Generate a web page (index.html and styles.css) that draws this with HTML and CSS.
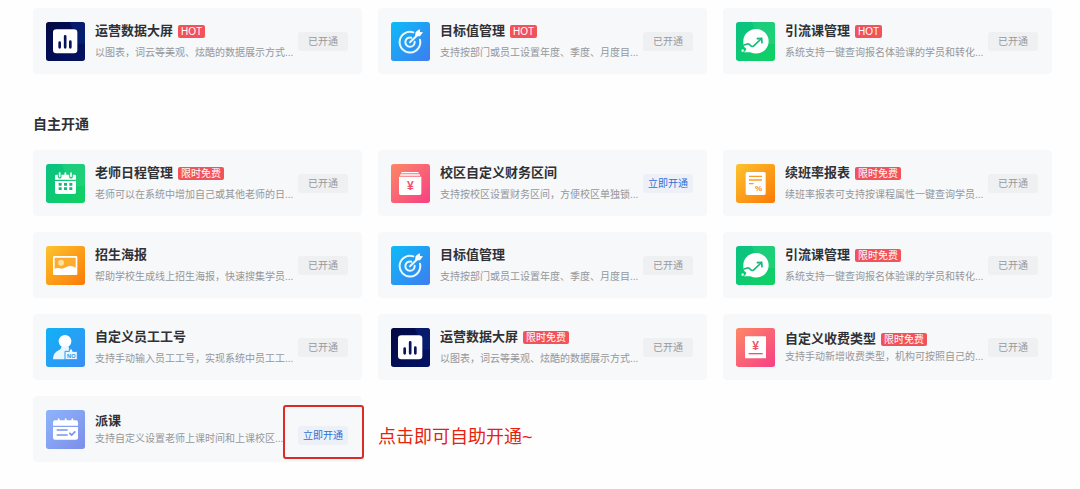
FILE: index.html
```html
<!DOCTYPE html>
<html lang="zh-CN">
<head>
<meta charset="utf-8">
<meta name="viewport" content="width=device-width, initial-scale=1">
<title>自主开通</title>
<link rel="stylesheet" href="styles.css">
</head>
<body>
<svg class="sprite" aria-hidden="true">
  <defs>
    <linearGradient id="g-navy" x1="0" y1="0" x2="1" y2="1"><stop offset="0" stop-color="#020944"/><stop offset="1" stop-color="#041264"/></linearGradient>
    <linearGradient id="g-blue" x1="0" y1="0" x2="1" y2="1"><stop offset="0" stop-color="#0cbcf8"/><stop offset="1" stop-color="#3f7cf0"/></linearGradient>
    <linearGradient id="g-green" x1="0" y1="0" x2="1" y2="1"><stop offset="0" stop-color="#09c183"/><stop offset="1" stop-color="#12d163"/></linearGradient>
    <linearGradient id="g-orange" x1="0" y1="0" x2="1" y2="1"><stop offset="0" stop-color="#fdc32d"/><stop offset="1" stop-color="#fb7a08"/></linearGradient>
    <linearGradient id="g-pink" x1="0" y1="0" x2="1" y2="1"><stop offset="0" stop-color="#fd8865"/><stop offset="1" stop-color="#f73f85"/></linearGradient>
    <linearGradient id="g-sky" x1="0" y1="0" x2="1" y2="1"><stop offset="0" stop-color="#10b2f6"/><stop offset="1" stop-color="#3a8ef3"/></linearGradient>
    <linearGradient id="g-lilac" x1="0" y1="0" x2="1" y2="1"><stop offset="0" stop-color="#8db4fb"/><stop offset="1" stop-color="#7d8eea"/></linearGradient>
  </defs>
  <symbol id="i-bars" viewBox="0 0 117 117">
    <rect width="117" height="117" rx="8" fill="url(#g-navy)"/>
    <path d="M72 0h37q8 0 8 8v57H94z" fill="#0a2a86" opacity=".5"/>
    <rect x="21" y="22" width="73" height="72" rx="10" fill="#fff"/>
    <path d="M41 62v14M57.500 43v33M73 59v17" stroke="#07145c" stroke-width="8" stroke-linecap="round"/>
  </symbol>
  <symbol id="i-target" viewBox="0 0 117 117">
    <rect width="117" height="117" rx="8" fill="url(#g-blue)"/>
    <g fill="none" stroke="#e9f8ff" stroke-width="6" stroke-linecap="round">
      <path d="M67 31A31 31 0 1 0 87 53"/>
      <path d="M61 47A14 14 0 1 0 71 59"/>
      <path d="M57 61L82 37"/>
    </g>
    <path d="M72 43l2-13 12-9 1 9 9 1-9 12z" fill="#fff"/>
  </symbol>
  <symbol id="i-growth" viewBox="0 0 117 117">
    <rect width="117" height="117" rx="8" fill="url(#g-green)"/>
    <path d="M48 0h61q8 0 8 8v58L70 66z" fill="#35d884" opacity=".4"/>
    <path d="M22 61A38 37 0 1 1 43 91L23 91q7-4 8-11-7-4-9-12z" fill="#fff"/>
    <path d="M22 70l12-4q5-1 9 4 6 7 12 0l20-19" fill="none" stroke="#17b87b" stroke-width="5"/>
    <path d="M62 50l15-1 1 15" fill="none" stroke="#17b87b" stroke-width="5"/>
    <circle cx="20" cy="86" r="4" fill="#c7f5dd"/>
  </symbol>
  <symbol id="i-calendar" viewBox="0 0 117 117">
    <rect width="117" height="117" rx="8" fill="url(#g-green)"/>
    <path d="M48 0h61q8 0 8 8v58L70 66z" fill="#35d884" opacity=".4"/>
    <path d="M27 47V36q0-4 4-4h55q4 0 4 4v11zM27 51h63v34q0 5-5 5H32q-5 0-5-5z" fill="#fff"/>
    <path d="M41 27v11M75 27v11" stroke="#1bc97e" stroke-width="11" stroke-linecap="round"/>
    <path d="M41 27v10M58 27v6M75 27v10" stroke="#fff" stroke-width="5" stroke-linecap="round"/>
    <path d="M38 61h9M54 61h9M70 61h9M38 74h9M54 74h9M70 74h9" stroke="#12b878" stroke-width="8"/>
  </symbol>
  <symbol id="i-image" viewBox="0 0 117 117">
    <rect width="117" height="117" rx="8" fill="url(#g-orange)"/>
    <rect x="21" y="30" width="73" height="57" rx="4" fill="#fff"/>
    <path d="M26 35h63v30q-15-9-29-1-12 7-19 3-8-3-15 1z" fill="#fdac2d"/>
    <circle cx="45" cy="50" r="9" fill="#ffdf9c"/>
  </symbol>
  <symbol id="i-schedule" viewBox="0 0 117 117">
    <rect width="117" height="117" rx="8" fill="url(#g-lilac)"/>
    <path d="M21 47V37q0-6 6-6h63q6 0 6 6v10zM21 51h75v32q0 6-6 6H27q-6 0-6-6z" fill="#fff"/>
    <path d="M38 27v10M59 27v10M79 27v10" stroke="#fff" stroke-width="5" stroke-linecap="round"/>
    <path d="M32 60h33M32 75h33M70 69l7 6 11-11" fill="none" stroke="#7796ee" stroke-width="5"/>
  </symbol>
</svg>

<main class="page">
  <section class="grid" aria-label="热门应用">
    <article class="card">
      <svg class="icon" aria-hidden="true"><use href="#i-bars"/></svg>
      <div class="info"><h3 class="name">运营数据大屏<span class="badge">HOT</span></h3><p class="desc">以图表，词云等美观、炫酷的数据展示方式...</p></div>
      <button class="btn" type="button" disabled>已开通</button>
    </article>
    <article class="card">
      <svg class="icon" aria-hidden="true"><use href="#i-target"/></svg>
      <div class="info"><h3 class="name">目标值管理<span class="badge">HOT</span></h3><p class="desc">支持按部门或员工设置年度、季度、月度目...</p></div>
      <button class="btn" type="button" disabled>已开通</button>
    </article>
    <article class="card">
      <svg class="icon" aria-hidden="true"><use href="#i-growth"/></svg>
      <div class="info"><h3 class="name">引流课管理<span class="badge">HOT</span></h3><p class="desc">系统支持一键查询报名体验课的学员和转化...</p></div>
      <button class="btn" type="button" disabled>已开通</button>
    </article>
  </section>

  <h2 class="heading">自主开通</h2>

  <section class="grid" aria-label="自主开通">
    <article class="card">
      <svg class="icon" aria-hidden="true"><use href="#i-calendar"/></svg>
      <div class="info"><h3 class="name">老师日程管理<span class="badge">限时免费</span></h3><p class="desc">老师可以在系统中增加自己或其他老师的日...</p></div>
      <button class="btn" type="button" disabled>已开通</button>
    </article>
    <article class="card">
      <svg class="icon" viewBox="0 0 117 117" aria-hidden="true">
        <rect width="117" height="117" rx="8" fill="url(#g-pink)"/>
        <path d="M34 24h46q3 0 4 4H30q1-4 4-4zM28 31h59v4H27z" fill="#fff"/>
        <path d="M24 38h67v50q0 5-5 5H29q-5 0-5-5z" fill="#fff"/>
        <text x="58" y="78" class="yen">¥</text>
      </svg>
      <div class="info"><h3 class="name">校区自定义财务区间</h3><p class="desc">支持按校区设置财务区间，方便校区单独锁...</p></div>
      <button class="btn btn-open" type="button">立即开通</button>
    </article>
    <article class="card">
      <svg class="icon" viewBox="0 0 117 117" aria-hidden="true">
        <rect width="117" height="117" rx="8" fill="url(#g-orange)"/>
        <rect x="29" y="24" width="60" height="69" rx="5" fill="#fff"/>
        <path d="M39 37h39M39 48h39M39 59h14" stroke="#fb9a25" stroke-width="4"/>
        <text x="68" y="81" class="percent">%</text>
      </svg>
      <div class="info"><h3 class="name">续班率报表<span class="badge">限时免费</span></h3><p class="desc">续班率报表可支持按课程属性一键查询学员...</p></div>
      <button class="btn" type="button" disabled>已开通</button>
    </article>
    <article class="card">
      <svg class="icon" aria-hidden="true"><use href="#i-image"/></svg>
      <div class="info"><h3 class="name">招生海报</h3><p class="desc">帮助学校生成线上招生海报，快速搜集学员...</p></div>
      <button class="btn" type="button" disabled>已开通</button>
    </article>
    <article class="card">
      <svg class="icon" aria-hidden="true"><use href="#i-target"/></svg>
      <div class="info"><h3 class="name">目标值管理</h3><p class="desc">支持按部门或员工设置年度、季度、月度目...</p></div>
      <button class="btn" type="button" disabled>已开通</button>
    </article>
    <article class="card">
      <svg class="icon" aria-hidden="true"><use href="#i-growth"/></svg>
      <div class="info"><h3 class="name">引流课管理<span class="badge">限时免费</span></h3><p class="desc">系统支持一键查询报名体验课的学员和转化...</p></div>
      <button class="btn" type="button" disabled>已开通</button>
    </article>
    <article class="card">
      <svg class="icon" viewBox="0 0 117 117" aria-hidden="true">
        <rect width="117" height="117" rx="8" fill="url(#g-sky)"/>
        <circle cx="57" cy="40" r="19" fill="#fff"/>
        <path d="M21 94q0-20 17-27 8-3 9-12h20q1 9 10 13 16 7 17 26z" fill="#e8f6ff"/>
        <path d="M57 70h13v-7h10v7h14v25H57z" fill="#e8f6ff" stroke="#2f98ee" stroke-width="3"/>
        <text x="76" y="90" class="tag">NO</text>
      </svg>
      <div class="info"><h3 class="name">自定义员工工号</h3><p class="desc">支持手动输入员工工号，实现系统中员工工...</p></div>
      <button class="btn" type="button" disabled>已开通</button>
    </article>
    <article class="card">
      <svg class="icon" aria-hidden="true"><use href="#i-bars"/></svg>
      <div class="info"><h3 class="name">运营数据大屏<span class="badge">限时免费</span></h3><p class="desc">以图表，词云等美观、炫酷的数据展示方式...</p></div>
      <button class="btn" type="button" disabled>已开通</button>
    </article>
    <article class="card card-tight">
      <svg class="icon" viewBox="0 0 117 117" aria-hidden="true">
        <rect width="117" height="117" rx="8" fill="url(#g-pink)"/>
        <rect x="27" y="25" width="63" height="66" rx="2" fill="#fff"/>
        <text x="59" y="65" class="yen">¥</text>
        <path d="M38 77h42" stroke="#f0526c" stroke-width="4"/>
      </svg>
      <div class="info"><h3 class="name">自定义收费类型<span class="badge">限时免费</span></h3><p class="desc">支持手动新增收费类型，机构可按照自己的...</p></div>
      <button class="btn" type="button" disabled>已开通</button>
    </article>
    <article class="card card-tight card-marked">
      <svg class="icon" aria-hidden="true"><use href="#i-schedule"/></svg>
      <div class="info"><h3 class="name">派课</h3><p class="desc">支持自定义设置老师上课时间和上课校区...</p></div>
      <button class="btn btn-open" type="button">立即开通</button>
      <span class="marker"></span>
    </article>
    <p class="note">点击即可自助开通~</p>
  </section>
</main>
</body>
</html>
```

FILE: styles.css
```css
* { box-sizing: border-box; }

body {
  margin: 0;
  background: #fefefe;
  color: #2f3135;
  font-family: "Liberation Sans", "Noto Sans CJK SC", sans-serif;
}

h2, h3, p { margin: 0; }

.sprite {
  position: absolute;
  width: 0;
  height: 0;
}

.page { padding: 8px 28px 24px 33px; }

.grid {
  display: grid;
  grid-template-columns: repeat(3, minmax(0, 1fr));
  gap: 16px;
}

.heading {
  margin: 38px 0 14px;
  font-size: 14px;
  font-weight: 700;
  line-height: 24px;
}

.card {
  position: relative;
  display: flex;
  align-items: center;
  gap: 10px;
  padding: 13px 14px 13px 13px;
  border-radius: 4px;
  background: #f7f8fa;
}

.icon {
  flex: none;
  width: 39px;
  height: 39px;
}

.info {
  flex: 1;
  min-width: 0;
  white-space: nowrap;
}

.name {
  display: flex;
  align-items: center;
  gap: 5px;
  font-size: 13px;
  font-weight: 700;
  line-height: 20px;
}

.badge {
  padding: 0 3px;
  border-radius: 2px;
  background: #f2525a;
  color: #fff;
  font-size: 10px;
  font-weight: 400;
  line-height: 13px;
}

.desc {
  margin-top: 4px;
  color: #95979b;
  font-size: 10px;
  line-height: 16px;
}

.btn {
  flex: none;
  width: 50px;
  height: 19px;
  padding: 0;
  border: 0;
  border-radius: 3px;
  background: #eff0f2;
  color: #97999d;
  font: inherit;
  font-size: 10px;
  line-height: 19px;
}

.btn-open {
  background: #edf1f7;
  color: #2f6fd6;
  cursor: pointer;
}

.card-tight .info { padding-top: 2px; }
.card-tight .desc { margin: 0 0 2px; }

.card-marked .btn { margin-top: 13px; }

.marker {
  position: absolute;
  top: 9px;
  right: -2px;
  width: 81px;
  height: 54px;
  border: 2px solid #dc2a24;
  border-radius: 3px;
  pointer-events: none;
}

.note {
  align-self: center;
  padding-top: 16px;
  color: #e6220f;
  font-size: 18px;
  line-height: 26px;
}

.yen {
  fill: #f0526c;
  font-size: 36px;
  font-weight: 700;
  text-anchor: middle;
}

.percent {
  fill: #fb8a25;
  font-size: 24px;
  font-weight: 700;
  text-anchor: middle;
}

.tag {
  fill: #2f98ee;
  font-size: 17px;
  font-weight: 700;
  text-anchor: middle;
}
```
